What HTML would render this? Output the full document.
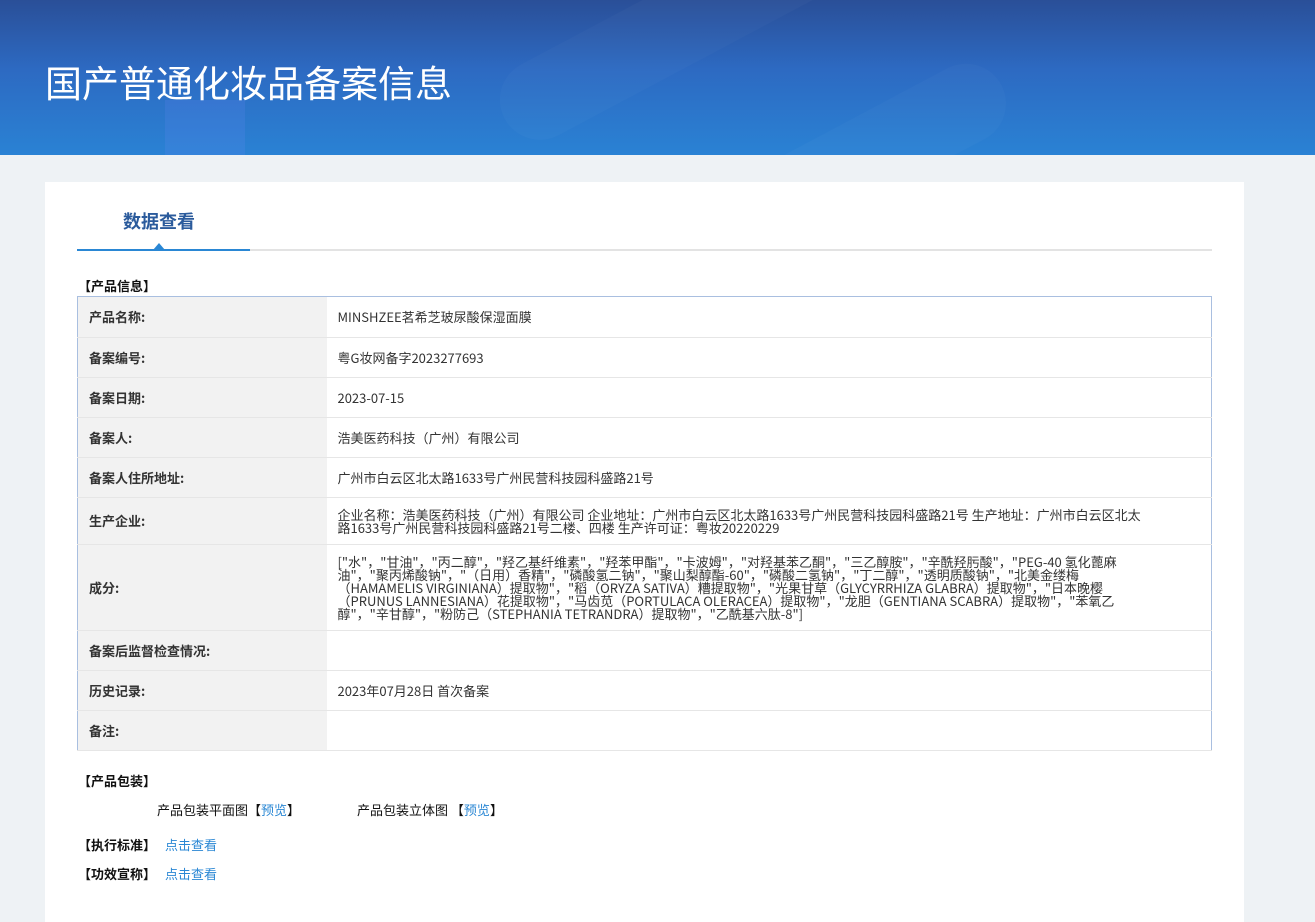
<!DOCTYPE html>
<html><head><meta charset="utf-8"><style>
*{margin:0;padding:0;box-sizing:border-box}
body{width:1315px;height:915px;overflow:hidden;background:#eef2f5;font-family:"Noto Sans CJK SC","Liberation Sans",sans-serif;color:#333;font-size:13px}
.hd{position:absolute;left:0;top:0;width:1315px;height:155px;background:linear-gradient(180deg,#2a4f98 0%,#2d6ac2 45%,#2a82d4 100%);overflow:hidden}
.hd .s1{position:absolute;left:480px;top:-20px;width:420px;height:80px;border-radius:40px;background:rgba(255,255,255,.025);transform:rotate(-28deg)}
.hd .s2{position:absolute;left:165px;top:100px;width:80px;height:60px;background:rgba(120,140,255,.15)}
.hd .s3{position:absolute;left:700px;top:120px;width:320px;height:80px;border-radius:40px;background:rgba(255,255,255,.025);transform:rotate(-28deg)}
.hd h1{position:absolute;left:45px;top:56px;font-size:37px;line-height:50px;font-weight:normal;color:#fff;letter-spacing:0}
.card{position:absolute;left:45px;top:182px;width:1199px;height:740px;background:#fff}
.tab{position:absolute;left:123px;top:207px;font-size:18px;line-height:28px;font-weight:bold;color:#2b5b9c}
.line{position:absolute;left:77px;top:249px;width:1135px;height:2px;background:#e3e3e3}
.line b{position:absolute;left:0;top:0;width:173px;height:2px;background:#2a87d4}
.tri{position:absolute;left:153px;top:243px;width:0;height:0;border-left:6px solid transparent;border-right:6px solid transparent;border-bottom:7px solid #2a87d4}
.sec{position:absolute;font-weight:bold;color:#111;font-size:13px;line-height:18px}
table{position:absolute;left:77px;top:296px;width:1135px;border-collapse:collapse;border:1px solid #a9bfe0}
td{border-bottom:1px solid #e6e6e6;padding:0 11px;vertical-align:middle;font-size:13px;color:#333;line-height:18px}
td.l{width:249px;background:#f2f2f2;font-weight:bold;color:#333}
td.v{line-height:13px}
a{color:#2a87d4;text-decoration:none}
</style></head><body>
<div class="hd"><div class="s1"></div><div class="s2"></div><div class="s3"></div><h1>国产普通化妆品备案信息</h1></div>
<div class="card"></div>
<div class="tab">数据查看</div>
<div class="line"><b></b></div><div class="tri"></div>
<div class="sec" style="left:78px;top:277px">【产品信息】</div>
<table>
<tr style="height:41px"><td class="l">产品名称:</td><td>MINSHZEE茗希芝玻尿酸保湿面膜</td></tr>
<tr style="height:40px"><td class="l">备案编号:</td><td>粤G妆网备字2023277693</td></tr>
<tr style="height:40px"><td class="l">备案日期:</td><td>2023-07-15</td></tr>
<tr style="height:40px"><td class="l">备案人:</td><td>浩美医药科技（广州）有限公司</td></tr>
<tr style="height:40px"><td class="l">备案人住所地址:</td><td>广州市白云区北太路1633号广州民营科技园科盛路21号</td></tr>
<tr style="height:47px"><td class="l">生产企业:</td><td class="v"><div style="width:815px">企业名称：浩美医药科技（广州）有限公司 企业地址：广州市白云区北太路1633号广州民营科技园科盛路21号 生产地址：广州市白云区北太路1633号广州民营科技园科盛路21号二楼、四楼 生产许可证：粤妆20220229</div></td></tr>
<tr style="height:86px"><td class="l">成分:</td><td class="v"><div style="width:815px">["水"，"甘油"，"丙二醇"，"羟乙基纤维素"，"羟苯甲酯"，"卡波姆"，"对羟基苯乙酮"，"三乙醇胺"，"辛酰羟肟酸"，"PEG-40 氢化蓖麻油"，"聚丙烯酸钠"，"（日用）香精"，"磷酸氢二钠"，"聚山梨醇酯-60"，"磷酸二氢钠"，"丁二醇"，"透明质酸钠"，"北美金缕梅（HAMAMELIS VIRGINIANA）提取物"，"稻（ORYZA SATIVA）糟提取物"，"光果甘草（GLYCYRRHIZA GLABRA）提取物"，"日本晚樱（PRUNUS LANNESIANA）花提取物"，"马齿苋（PORTULACA OLERACEA）提取物"，"龙胆（GENTIANA SCABRA）提取物"，"苯氧乙醇"，"辛甘醇"，"粉防己（STEPHANIA TETRANDRA）提取物"，"乙酰基六肽-8"]</div></td></tr>
<tr style="height:40px"><td class="l">备案后监督检查情况:</td><td></td></tr>
<tr style="height:40px"><td class="l">历史记录:</td><td>2023年07月28日 首次备案</td></tr>
<tr style="height:40px"><td class="l">备注:</td><td></td></tr>
</table>
<div class="sec" style="left:78px;top:772px">【产品包装】</div>
<div style="position:absolute;left:157px;top:801px;color:#111;line-height:18px">产品包装平面图【<a>预览</a>】</div>
<div style="position:absolute;left:357px;top:801px;color:#111;line-height:18px">产品包装立体图 【<a>预览</a>】</div>
<div class="sec" style="left:78px;top:836px">【执行标准】 <a style="font-weight:normal;margin-left:6px">点击查看</a></div>
<div class="sec" style="left:78px;top:865px">【功效宣称】 <a style="font-weight:normal;margin-left:6px">点击查看</a></div>
</body></html>
